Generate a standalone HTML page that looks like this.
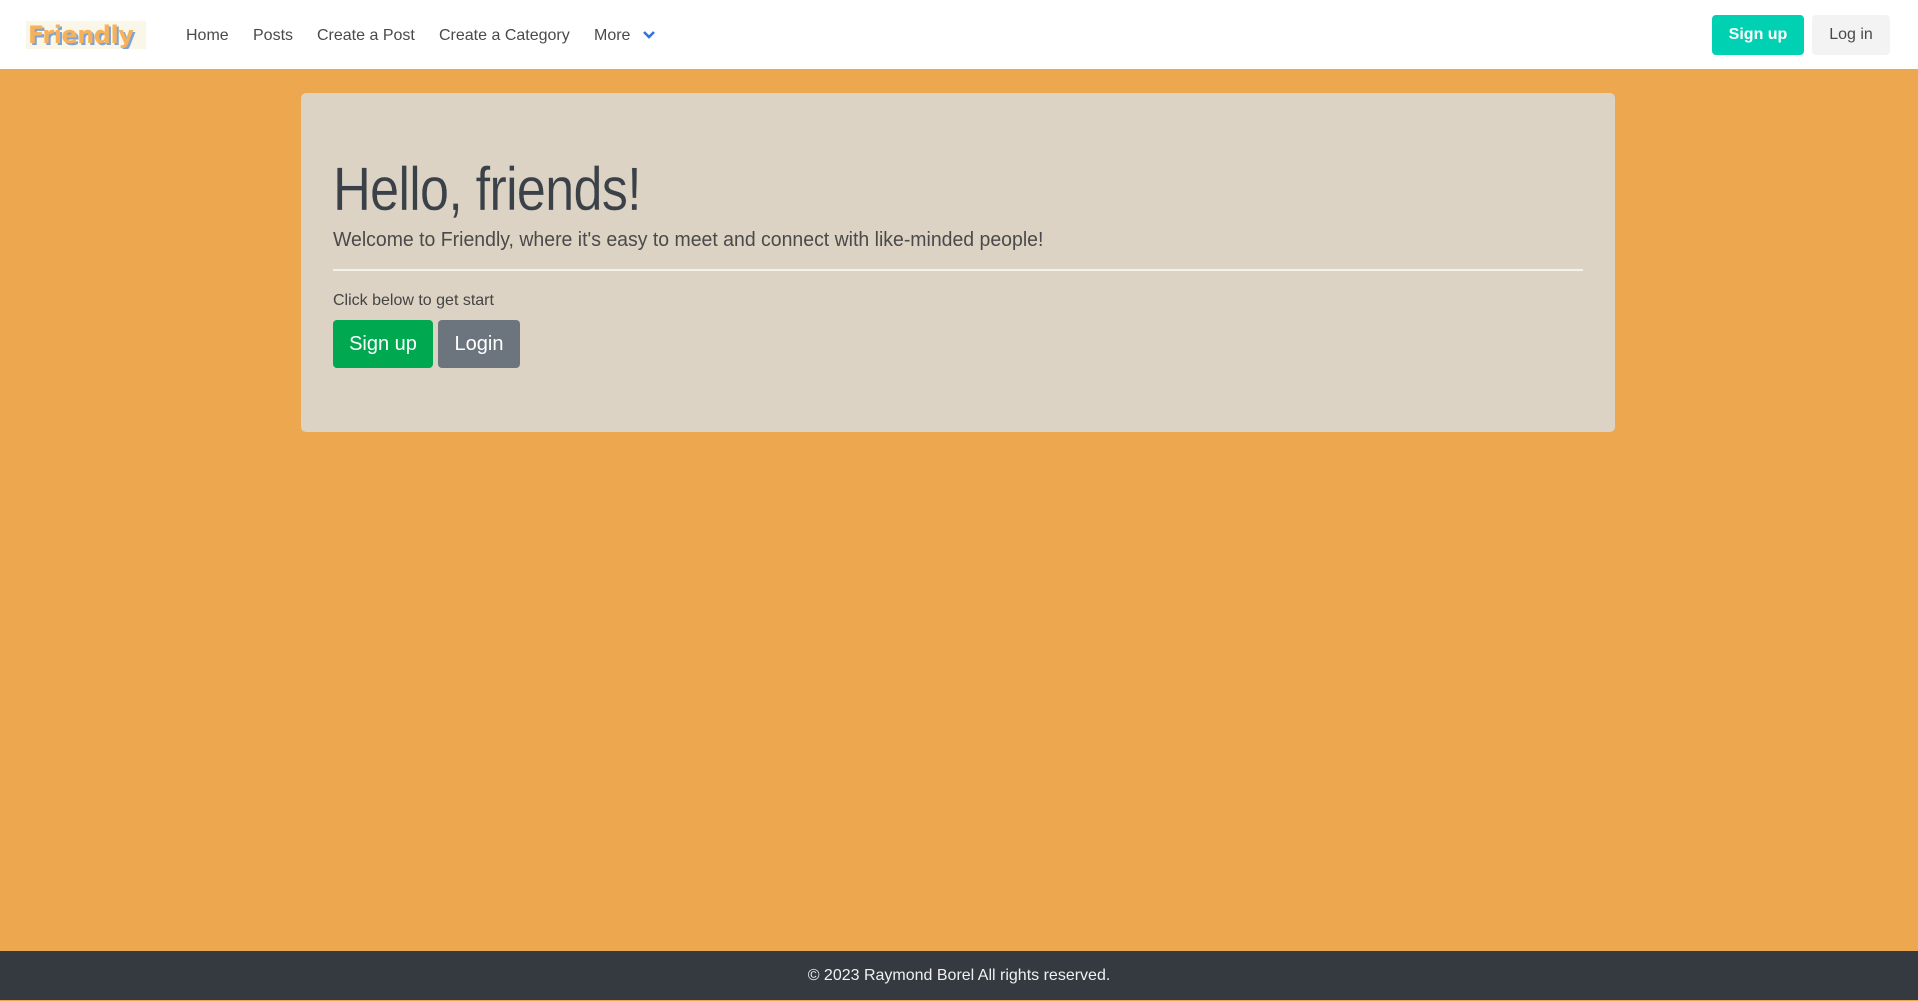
<!DOCTYPE html>
<html><head><meta charset="utf-8"><style>
*{box-sizing:border-box;margin:0;padding:0}
body{width:1918px;height:1000px;background:#eda74f;font-family:"Liberation Sans",sans-serif;position:relative;overflow:hidden}
.nav{position:absolute;left:0;top:0;width:1918px;height:69px;background:#fff}
.logo{position:absolute;left:26px;top:21px;width:120px;height:28px;background:#faf6e8;font-family:"DejaVu Sans",sans-serif;font-weight:bold;font-size:24px;line-height:28px;color:#f6b25a;text-shadow:2px 2px 0 #7fa3d6;letter-spacing:-0.5px;padding-left:2px;overflow:hidden;white-space:nowrap}
.nl{position:absolute;top:26px;font-size:16px;color:#4a4a4a;line-height:20px}
.chev{position:absolute;left:642px;top:30px}
.b1{position:absolute;left:1712px;top:15px;width:92px;height:40px;background:#00d1b2;border-radius:4px;color:#fff;font-weight:bold;font-size:16px;text-align:center;line-height:40px}
.b2{position:absolute;left:1812px;top:15px;width:78px;height:40px;background:#f3f3f3;border-radius:4px;color:#4a4a4a;font-size:16px;text-align:center;line-height:40px}
.card{position:absolute;left:301px;top:93px;width:1314px;height:339px;background:#dcd3c4;border-radius:5px}
h1{position:absolute;left:32px;top:60px;font-size:61px;font-weight:normal;color:#3b4148;line-height:72px;letter-spacing:-1px;transform:scaleX(0.86);transform-origin:0 0;-webkit-text-stroke:0.3px #dcd3c4}
.lead{position:absolute;left:32px;top:133px;font-size:20px;color:#4a4a4a;line-height:28px;transform:scaleX(0.973);transform-origin:0 0;white-space:nowrap}
hr{position:absolute;left:32px;top:176px;width:1250px;border:0;border-top:2px solid #f4f1ec}
.cb{position:absolute;left:32px;top:199px;font-size:16px;color:#444}
.s{position:absolute;left:32px;top:227px;width:100px;height:48px;background:#00a850;color:#fff;border-radius:4px;font-size:20px;text-align:center;line-height:48px}
.l{position:absolute;left:137px;top:227px;width:82px;height:48px;background:#6c757d;color:#fff;border-radius:4px;font-size:20px;text-align:center;line-height:48px}
.foot{position:absolute;left:0;bottom:0;width:1918px;height:49px;background:#343a40;color:#f0f0f0;font-size:16px;text-align:center;line-height:50px}
</style></head><body>
<div class="nav">
<div class="logo">Friendly</div>
<div class="nl" style="left:186px">Home</div>
<div class="nl" style="left:253px">Posts</div>
<div class="nl" style="left:317px">Create a Post</div>
<div class="nl" style="left:439px">Create a Category</div>
<div class="nl" style="left:594px">More</div>
<svg class="chev" width="14" height="10" viewBox="0 0 14 10"><path d="M2 2l5 5 5-5" stroke="#3273dc" stroke-width="2.6" fill="none"/></svg>
<div class="b1">Sign up</div>
<div class="b2">Log in</div>
</div>
<div class="card">
<h1>Hello, friends!</h1>
<div class="lead">Welcome to Friendly, where it's easy to meet and connect with like-minded people!</div>
<hr>
<div class="cb">Click below to get start</div>
<div class="s">Sign up</div>
<div class="l">Login</div>
</div>
<div class="foot">© 2023 Raymond Borel All rights reserved.</div>
</body></html>
